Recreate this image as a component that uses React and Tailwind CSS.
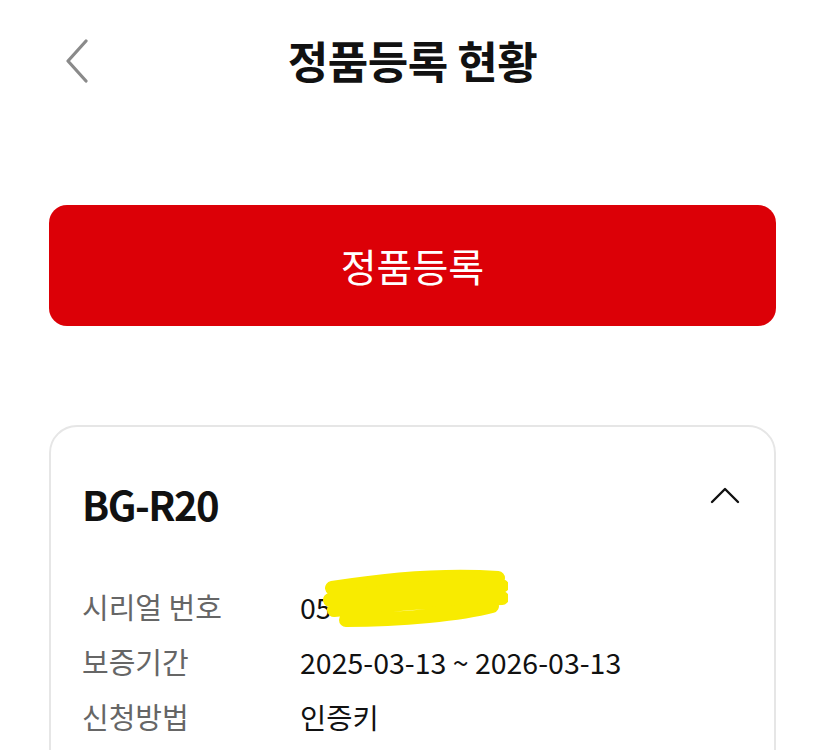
// App.jsx — 정품등록 현황 screen
import React from "react";

const FONT = { fontFamily: '"Noto Sans CJK KR", "Noto Sans", sans-serif' };

// Rows shown inside the product card
const ROWS = [
  { label: "시리얼 번호", value: "05", masked: true },
  { label: "보증기간", value: "2025-03-13 ~ 2026-03-13" },
  { label: "신청방법", value: "인증키" },
];

function BackIcon() {
  return (
    <svg width="26" height="44" viewBox="0 0 26 44" fill="none">
      <path d="M22 2 L4 22 L22 42" stroke="#8a8a8a" strokeWidth="3.2" strokeLinecap="round" strokeLinejoin="round" />
    </svg>
  );
}

function ChevronUp() {
  return (
    <svg width="30" height="17" viewBox="0 0 30 17" fill="none">
      <path d="M2 15 L15 2 L28 15" stroke="#111" strokeWidth="2.4" strokeLinecap="round" strokeLinejoin="round" />
    </svg>
  );
}

// Yellow marker scribble hiding the serial number
function Scribble() {
  return (
    <svg className="absolute left-[22px] top-[-18px]" width="186" height="64" viewBox="0 0 186 64" fill="none">
      <path
        d="M10 20 C60 12 120 6 176 10 M8 32 C60 24 120 20 180 18 M12 42 C70 36 130 32 180 30 M24 52 C80 52 140 46 170 38"
        stroke="#f8eb00"
        strokeWidth="14"
        strokeLinecap="round"
      />
      <path d="M30 34 C80 28 130 24 165 22" stroke="#f8eb00" strokeWidth="26" strokeLinecap="round" />
    </svg>
  );
}

export default function App() {
  return (
    <div className="w-[825px] h-[750px] bg-white overflow-hidden" style={FONT}>
      {/* Header */}
      <div className="relative h-[124px] flex items-center justify-center">
        <button className="absolute left-[64px] top-[39px]">
          <BackIcon />
        </button>
        <h1 className="text-[44px] font-bold text-[#111] tracking-[-0.5px] mt-[-4px]">정품등록 현황</h1>
      </div>

      <div className="px-[49px] pt-[81px]">
        <button className="w-full h-[121px] rounded-[18px] bg-[#dc0007] text-white text-[39px] flex items-center justify-center">
          정품등록
        </button>

        {/* Product card */}
        <div className="mt-[99px] rounded-[28px] border-2 border-[#e6e6e6] h-[400px] px-[31px] pt-[47px]">
          <div className="flex items-center justify-between h-[60px]">
            <span className="text-[40px] font-bold text-[#111] tracking-[-1.5px]">BG-R20</span>
            <span className="mr-[3px] mt-[-18px]">
              <ChevronUp />
            </span>
          </div>
          <div className="mt-[53px] flex flex-col gap-[15px]">
            {ROWS.map((row) => (
              <div key={row.label} className="flex items-center h-[40px]">
                <span className="w-[218px] text-[29px] text-[#666]">{row.label}</span>
                <span className="relative text-[28.5px] text-[#111]">
                  {row.value}
                  {row.masked && <Scribble />}
                </span>
              </div>
            ))}
          </div>
        </div>
      </div>
    </div>
  );
}
